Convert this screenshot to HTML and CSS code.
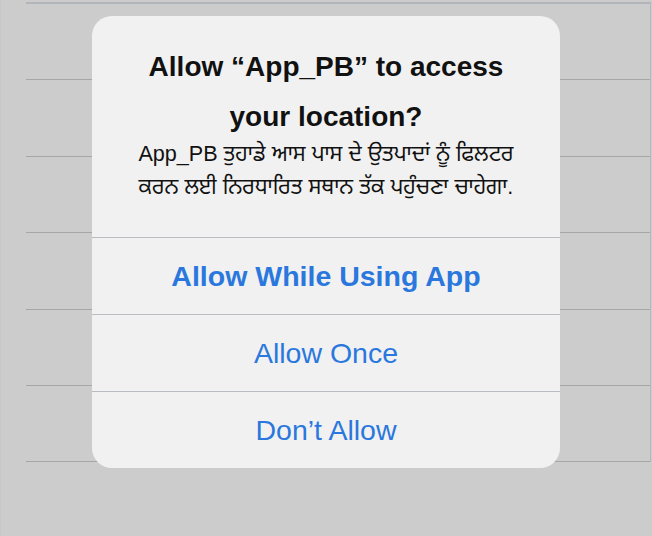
FILE: index.html
```html
<!DOCTYPE html>
<html lang="en">
<head>
<meta charset="utf-8">
<title>Location permission</title>
<link rel="stylesheet" href="styles.css">
</head>
<body>
<div class="screen">
  <div class="list">
    <div class="row"></div>
    <div class="row"></div>
    <div class="row"></div>
    <div class="row"></div>
    <div class="row"></div>
    <div class="row"></div>
  </div>
  <div class="alert" role="alertdialog">
    <div class="alert-head">
      <h1 class="alert-title">Allow “App_PB” to access your location?</h1>
      <p class="alert-msg">App_PB ਤੁਹਾਡੇ ਆਸ ਪਾਸ ਦੇ ਉਤਪਾਦਾਂ ਨੂੰ ਫਿਲਟਰ ਕਰਨ ਲਈ ਨਿਰਧਾਰਿਤ ਸਥਾਨ ਤੱਕ ਪਹੁੰਚਣਾ ਚਾਹੇਗਾ.</p>
    </div>
    <button class="alert-btn alert-btn-primary">Allow While Using App</button>
    <button class="alert-btn">Allow Once</button>
    <button class="alert-btn">Don’t Allow</button>
  </div>
</div>
</body>
</html>
```
FILE: styles.css
```css
html, body {
  margin: 0;
  padding: 0;
}
body {
  background: #cccccc;
  font-family: "Liberation Sans", Arial, sans-serif;
}
.screen {
  position: relative;
  width: 652px;
  height: 536px;
  overflow: hidden;
  background: #cccccc;
  border-left: 1px dotted #c2c6cb;
  box-sizing: border-box;
}
.list {
  margin: 2px 1px 0 25px;
  border-top: 2px solid #b2b6ba;
  border-right: 1px solid #b4b8bd;
}
.row {
  height: 75.4px;
  border-bottom: 1px solid #a6a6a6;
}
.alert {
  position: absolute;
  left: 91px;
  top: 16px;
  width: 468px;
  height: 452px;
  background: #f1f1f1;
  border-radius: 20px;
  display: flex;
  flex-direction: column;
  overflow: hidden;
}
.alert-head {
  padding: 26px 28px 0;
  height: 195px;
  text-align: center;
}
.alert-title {
  margin: 0;
  font-size: 28px;
  line-height: 50px;
  font-weight: bold;
  color: #111111;
}
.alert-msg {
  margin: -5px 0 0;
  font-family: "Liberation Sans", "Noto Sans Gurmukhi", "Lohit Gurmukhi", "Noto Sans", sans-serif;
  font-size: 21.6px;
  line-height: 33px;
  color: #111111;
}
.alert-btn {
  display: flex;
  align-items: center;
  justify-content: center;
  height: 77px;
  box-sizing: border-box;
  border: 0;
  border-top: 1px solid #b9bcc0;
  background: transparent;
  padding: 0;
  font-family: "Liberation Sans", Arial, sans-serif;
  font-size: 28.5px;
  color: #2a78dd;
}
.alert-btn-primary {
  font-weight: bold;
}
```
